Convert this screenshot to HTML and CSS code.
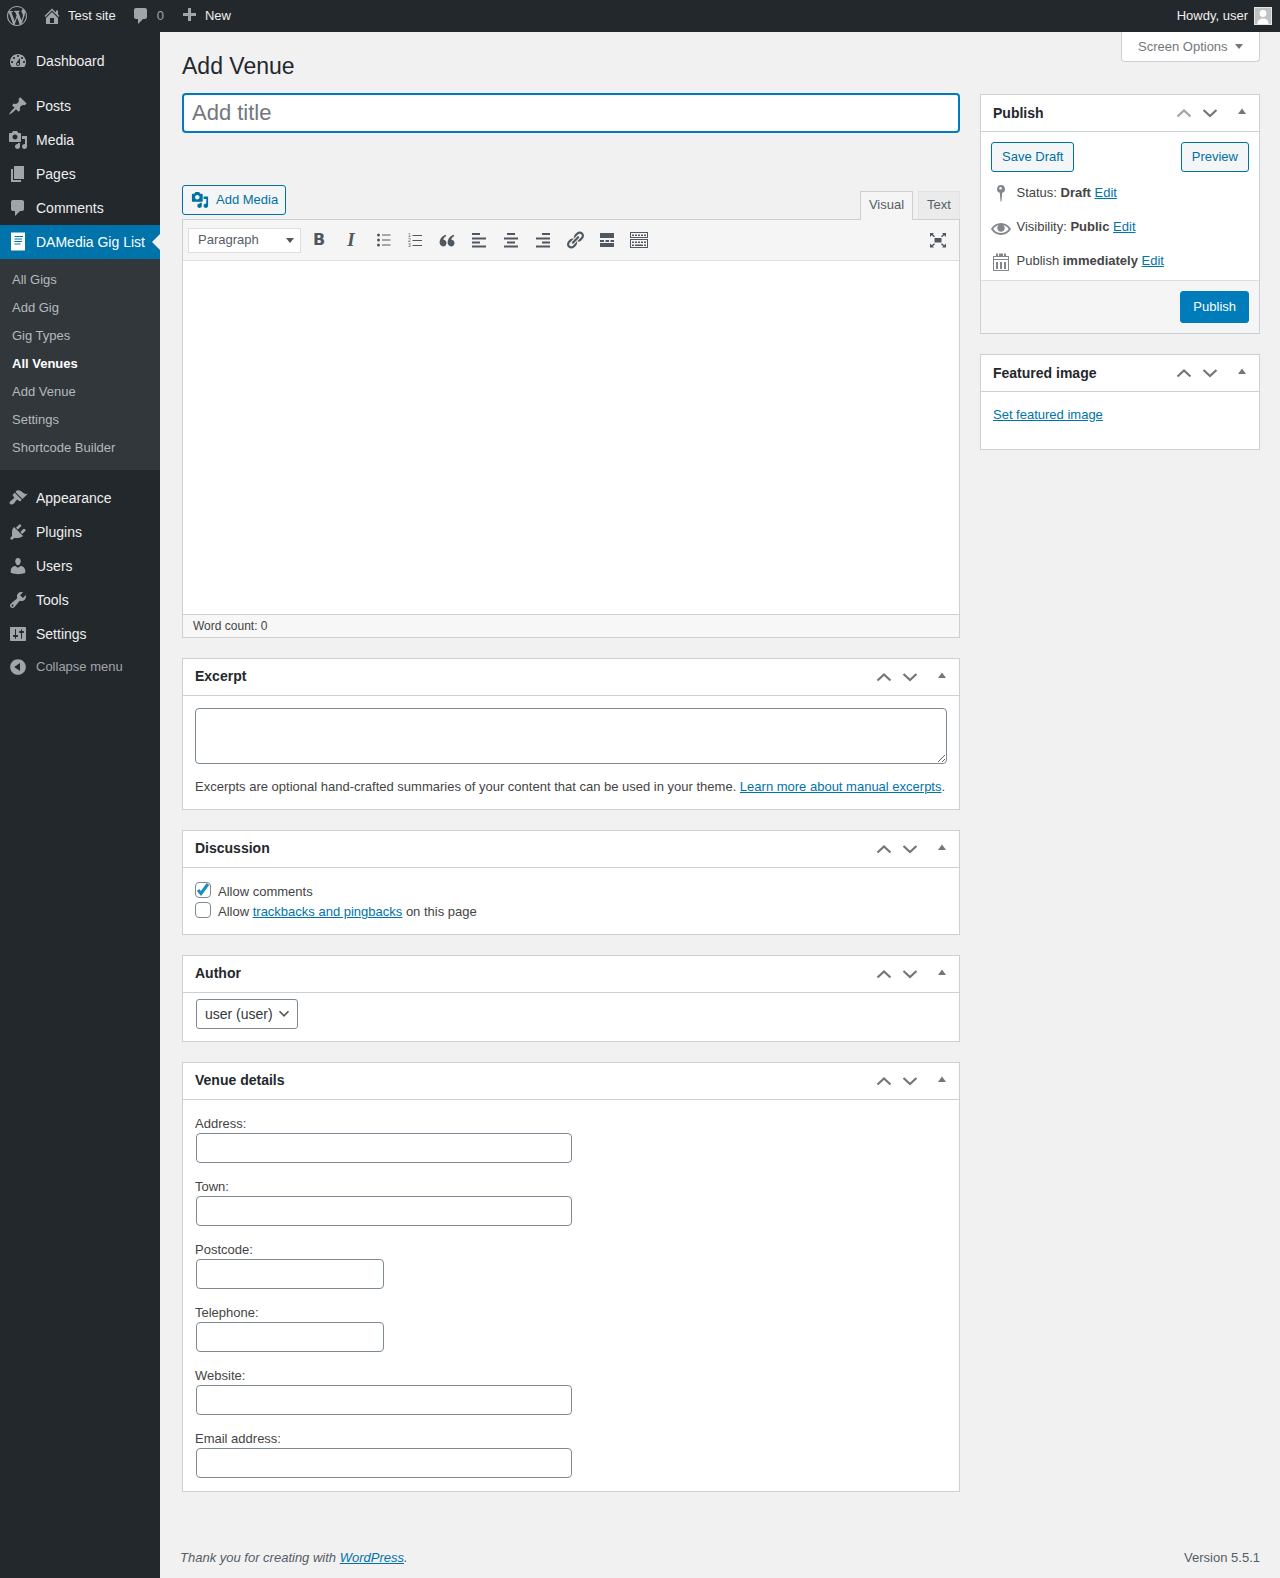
FILE: index.html
```html
<!DOCTYPE html>
<html lang="en">
<head>
  <meta charset="UTF-8">
  <meta name="viewport" content="width=device-width, initial-scale=1.0">
  <title>Add Venue</title>
  <link rel="stylesheet" href="styles.css">
</head>
<body>

<svg class="sprite" xmlns="http://www.w3.org/2000/svg">
  <symbol id="i-dashboard" viewBox="0 0 20 20"><path d="M3.76 16h12.48c1.1-1.37 1.76-3.11 1.76-5 0-4.42-3.58-8-8-8s-8 3.58-8 8c0 1.89.66 3.63 1.76 5zM10 4c.55 0 1 .45 1 1s-.45 1-1 1-1-.45-1-1 .45-1 1-1zM6 6c.55 0 1 .45 1 1s-.45 1-1 1-1-.45-1-1 .45-1 1-1zm8 0c.55 0 1 .45 1 1s-.45 1-1 1-1-.45-1-1 .45-1 1-1zm-5.37 5.55L12 7v6c0 1.1-.9 2-2 2s-2-.9-2-2c0-.57.24-1.08.63-1.45zM4 10c.55 0 1 .45 1 1s-.45 1-1 1-1-.45-1-1 .45-1 1-1zm12 0c.55 0 1 .45 1 1s-.45 1-1 1-1-.45-1-1 .45-1 1-1zm-5 3c0-.55-.45-1-1-1s-1 .45-1 1 .45 1 1 1 1-.45 1-1z"/></symbol>
  <symbol id="i-post" viewBox="0 0 20 20"><path d="M10.44 3.02l1.82-1.82 6.36 6.35-1.83 1.82c-1.05-.68-2.48-.57-3.41.36l-.75.75c-.92.93-1.04 2.35-.35 3.41l-1.83 1.82-2.41-2.41-2.8 2.79c-.42.42-3.38 2.71-3.8 2.29s1.86-3.39 2.28-3.81l2.79-2.79L4.1 9.36l1.83-1.82c1.05.69 2.48.57 3.4-.36l.75-.75c.93-.92 1.05-2.35.36-3.41z"/></symbol>
  <symbol id="i-media" viewBox="0 0 20 20"><path d="M13 11V4c0-.55-.45-1-1-1h-1.67L9 1H5L3.67 3H2c-.55 0-1 .45-1 1v7c0 .55.45 1 1 1h10c.55 0 1-.45 1-1zM7 4.5c1.38 0 2.5 1.12 2.5 2.5S8.38 9.5 7 9.5 4.5 8.38 4.5 7 5.62 4.5 7 4.5zM14 6h5v10.5c0 1.38-1.12 2.5-2.5 2.5S14 17.88 14 16.5s1.12-2.5 2.5-2.5c.17 0 .34.02.5.05V9h-3V6zm-4 8.05V13h2v3.5c0 1.38-1.12 2.5-2.5 2.5S7 17.88 7 16.5 8.12 14 9.5 14c.17 0 .34.02.5.05z"/></symbol>
  <symbol id="i-page" viewBox="0 0 20 20"><path d="M6 15V2h10v13H6zm-1 1h8v2H3V5h2v11z"/></symbol>
  <symbol id="i-comment" viewBox="0 0 20 20"><path d="M5 2h9c1.1 0 2 .9 2 2v7c0 1.1-.9 2-2 2h-2l-5 5v-5H5c-1.1 0-2-.9-2-2V4c0-1.1.9-2 2-2z"/></symbol>
  <symbol id="i-appearance" viewBox="0 0 20 20"><path d="M14.48 11.06L7.41 3.99l1.5-1.5c.5-.56 2.3-.47 3.51.32 1.21.8 1.43 1.28 2.91 2.1 1.18.64 2.45 1.26 4.45.85zm-.71.71L6.7 4.7 4.93 6.47c-.39.39-.39 1.02 0 1.41l1.06 1.06c.39.39.39 1.03 0 1.42-.6.6-1.43 1.11-2.21 1.69-.35.26-.7.53-1.01.84C1.43 13.23 1.29 15.2 2 16s2.77.57 4.11-.77c.31-.31.58-.66.84-1.01.58-.78 1.09-1.61 1.69-2.21.39-.39 1.03-.39 1.42 0l1.06 1.06c.39.39 1.02.39 1.41 0z"/></symbol>
  <symbol id="i-plugins" viewBox="0 0 20 20"><path d="M13.11 4.36L9.87 7.6 8 5.73l3.24-3.24c.35-.34 1.05-.2 1.56.32.52.51.66 1.21.31 1.55zm-8 1.77l.91-1.12 9.01 9.01-1.19.84c-.71.71-2.63 1.16-3.82 1.16H6.14L4.9 17.26c-.59.59-1.54.59-2.12 0-.59-.58-.59-1.53 0-2.12l1.24-1.24v-3.88c0-1.13.4-3.19 1.09-3.89zm7.26 3.97l3.24-3.24c.34-.35 1.04-.21 1.55.31.52.51.66 1.21.31 1.55l-3.24 3.25z"/></symbol>
  <symbol id="i-users" viewBox="0 0 20 20"><path d="M10 9.25c-2.27 0-2.73-3.44-2.73-3.44C7 4.02 7.82 2 9.97 2c2.16 0 2.98 2.02 2.71 3.81 0 0-.41 3.44-2.68 3.44zm0 2.57L12.72 10c2.39 0 4.52 2.33 4.52 4.53v2.49s-3.65 1.13-7.24 1.13c-3.65 0-7.24-1.13-7.24-1.13v-2.49c0-2.25 1.94-4.48 4.47-4.48z"/></symbol>
  <symbol id="i-tools" viewBox="0 0 20 20"><path d="M16.68 9.77c-1.34 1.34-3.3 1.67-4.95.99l-5.41 6.52c-.99.99-2.59.99-3.58 0s-.99-2.59 0-3.57l6.52-5.42c-.68-1.65-.35-3.61.99-4.95 1.28-1.28 3.12-1.62 4.72-1.06l-2.89 2.89 2.82 2.82 2.86-2.87c.53 1.58.18 3.39-1.08 4.65zM3.81 16.21c.4.39 1.04.39 1.43 0 .4-.4.4-1.04 0-1.43-.39-.4-1.03-.4-1.43 0-.39.39-.39 1.03 0 1.43z"/></symbol>
  <symbol id="i-settings" viewBox="0 0 20 20"><path d="M18 16V4c0-.55-.45-1-1-1H3c-.55 0-1 .45-1 1v12c0 .55.45 1 1 1h14c.55 0 1-.45 1-1zM8 11h1c.55 0 1 .45 1 1s-.45 1-1 1H8v1.5c0 .28-.22.5-.5.5s-.5-.22-.5-.5V13H6c-.55 0-1-.45-1-1s.45-1 1-1h1V5.5c0-.28.22-.5.5-.5s.5.22.5.5V11zm5-2h-1c-.55 0-1-.45-1-1s.45-1 1-1h1V5.5c0-.28.22-.5.5-.5s.5.22.5.5V7h1c.55 0 1 .45 1 1s-.45 1-1 1h-1v5.5c0 .28-.22.5-.5.5s-.5-.22-.5-.5V9z"/></symbol>
  <symbol id="i-up" viewBox="0 0 20 20"><path d="M3.5 13.5L10 7.5l6.500 6" fill="none" stroke="currentColor" stroke-width="2.200"/></symbol>
  <symbol id="i-down" viewBox="0 0 20 20"><path d="M3.500 7L10 13l6.500-6" fill="none" stroke="currentColor" stroke-width="2.200"/></symbol>
  <symbol id="i-tri" viewBox="0 0 20 20"><path d="M6 11L10 5.500l4 5.500z"/></symbol>
</svg>

<header class="adminbar">
  <svg class="bar-logo" viewBox="0 0 20 20"><path d="M20 10c0-5.510-4.490-10-10-10C4.480 0 0 4.490 0 10c0 5.520 4.480 10 10 10 5.510 0 10-4.480 10-10zM7.780 15.370L4.370 6.220c.55-.02 1.170-.08 1.170-.08.5-.06.44-1.130-.06-1.110 0 0-1.450.11-2.370.11-.18 0-.37 0-.58-.01C4.120 2.690 6.870 1.110 10 1.110c2.330 0 4.450.87 6.050 2.340-.68-.11-1.650.39-1.650 1.580 0 .74.45 1.360.9 2.100.35.61.55 1.360.55 2.460 0 1.490-1.400 5-1.400 5l-3.030-8.370c.54-.02.82-.17.82-.17.5-.05.44-1.250-.06-1.220 0 0-1.440.12-2.380.12-.87 0-2.330-.12-2.330-.12-.5-.03-.56 1.200-.06 1.220l.92.08 1.260 3.410zM17.410 10c.24-.64.74-1.870.43-4.250.7 1.290 1.050 2.710 1.050 4.250 0 3.290-1.730 6.240-4.400 7.780.97-2.590 1.940-5.200 2.920-7.780zM6.100 18.090C3.120 16.650 1.110 13.530 1.110 10c0-1.300.23-2.480.72-3.590C3.250 10.300 4.670 14.200 6.100 18.090zm4.030-6.630l2.580 6.980c-.86.29-1.760.45-2.710.45-.79 0-1.570-.11-2.290-.33.81-2.380 1.620-4.740 2.420-7.100z"/></svg>
  <a class="bar-item bar-home" href="#">
    <svg viewBox="0 0 20 20"><path d="M16 8.500l1.530 1.530-1.060 1.060L10 4.620l-6.470 6.470-1.060-1.060L10 2.500l4 4v-2h2v4zm-6-2.460l6 5.990V18H4v-5.970zM12 17v-5H8v5h4z"/></svg>
    Test site
  </a>
  <a class="bar-item bar-comments" href="#">
    <svg viewBox="0 0 20 20"><use href="#i-comment"/></svg>
    <span class="bar-count">0</span>
  </a>
  <a class="bar-item bar-new" href="#">
    <svg viewBox="0 0 20 20"><path d="M17 7v3h-5v5H9v-5H4V7h5V2h3v5h5z"/></svg>
    New
  </a>
  <a class="bar-item bar-user" href="#">
    Howdy, user
    <svg class="avatar" viewBox="0 0 18 18">
      <rect width="18" height="18" fill="#e4e5e6"/>
      <rect x="1" y="1" width="16" height="16" fill="#bfc1c3"/>
      <circle cx="9" cy="6.500" r="3.400" fill="#fff"/>
      <path d="M3.500 17c0-4 2.500-5.500 5.500-5.500s5.500 1.500 5.500 5.500z" fill="#fff"/>
    </svg>
  </a>
</header>

<div class="layout">
  <nav class="sidebar">
    <ul class="menu">
      <li class="menu-item"><svg><use href="#i-dashboard"/></svg>Dashboard</li>
      <li class="menu-sep"></li>
      <li class="menu-item"><svg><use href="#i-post"/></svg>Posts</li>
      <li class="menu-item"><svg><use href="#i-media"/></svg>Media</li>
      <li class="menu-item"><svg><use href="#i-page"/></svg>Pages</li>
      <li class="menu-item"><svg><use href="#i-comment"/></svg>Comments</li>
      <li class="menu-item current">
        <svg viewBox="0 0 20 20"><path fill-rule="evenodd" d="M3 .5h14v18H3zM6.500 4v1H15V4zm0 2.500v1H14V6.500zm0 2.500v1H14V9zm0 2.500v1H12.500v-1z"/></svg>
        DAMedia Gig List
      </li>
      <li class="submenu">
        <ul>
          <li>All Gigs</li>
          <li>Add Gig</li>
          <li>Gig Types</li>
          <li class="sub-current">All Venues</li>
          <li>Add Venue</li>
          <li>Settings</li>
          <li>Shortcode Builder</li>
        </ul>
      </li>
      <li class="menu-sep"></li>
      <li class="menu-item"><svg><use href="#i-appearance"/></svg>Appearance</li>
      <li class="menu-item"><svg><use href="#i-plugins"/></svg>Plugins</li>
      <li class="menu-item"><svg><use href="#i-users"/></svg>Users</li>
      <li class="menu-item"><svg><use href="#i-tools"/></svg>Tools</li>
      <li class="menu-item"><svg><use href="#i-settings"/></svg>Settings</li>
      <li class="menu-item collapse">
        <svg viewBox="0 0 20 20"><path d="M10 2.160c4.330 0 7.840 3.510 7.840 7.840s-3.510 7.840-7.840 7.840S2.160 14.330 2.160 10 5.710 2.160 10 2.160zm2 11.720V6.120L6.180 9.970z"/></svg>
        Collapse menu
      </li>
    </ul>
  </nav>

  <main class="content">
    <div class="page-head">
      <h1>Add Venue</h1>
      <button class="screen-options">Screen Options<span class="caret"></span></button>
    </div>

    <div class="columns">
      <div class="col-main">
        <input class="title-input" type="text" placeholder="Add title">

        <div class="editor-top">
          <button class="btn btn-media">
            <svg><use href="#i-media"/></svg>
            Add Media
          </button>
          <div class="tabs">
            <span class="tab active">Visual</span>
            <span class="tab">Text</span>
          </div>
        </div>

        <div class="editor">
          <div class="toolbar">
            <div class="format-select">Paragraph<span class="caret dark"></span></div>
            <span class="tool tool-b">B</span>
            <span class="tool tool-i">I</span>
            <span class="tool">
              <svg viewBox="0 0 20 20"><circle cx="5.500" cy="5" r="1.500"/><circle cx="5.500" cy="10" r="1.500"/><circle cx="5.500" cy="15" r="1.500"/><rect x="9" y="4.500" width="8.500" height="1"/><rect x="9" y="9.500" width="8.500" height="1"/><rect x="9" y="14.500" width="8.500" height="1"/></svg>
            </span>
            <span class="tool">
              <svg viewBox="0 0 20 20"><text x="3" y="7" class="ol-num">1</text><text x="3" y="12" class="ol-num">2</text><text x="3" y="17" class="ol-num">3</text><rect x="7.500" y="5" width="9.500" height="1"/><rect x="7.500" y="10" width="9.500" height="1"/><rect x="7.500" y="15" width="9.500" height="1"/></svg>
            </span>
            <span class="tool">
              <svg viewBox="0 0 20 20"><path d="M9.500 13c0 2-1.400 3.400-3.300 3.400S2.600 15 2.600 12.600C2.600 9 5.200 6 8.600 4.800l.7 1.200C7.500 7 6.500 8.200 6.300 9.700 8.200 9.600 9.500 11 9.500 13zM17.500 13c0 2-1.400 3.400-3.300 3.400s-3.600-1.400-3.600-3.800c0-3.600 2.600-6.600 6-7.800l.7 1.200c-1.800 1-2.800 2.200-3 3.700 1.900-.1 3.200 1.300 3.200 3.300z"/></svg>
            </span>
            <span class="tool">
              <svg viewBox="0 0 20 20"><rect x="3" y="3" width="8" height="2"/><rect x="3" y="7.500" width="14" height="2"/><rect x="3" y="11.500" width="8" height="2"/><rect x="3" y="15.500" width="14" height="2"/></svg>
            </span>
            <span class="tool">
              <svg viewBox="0 0 20 20"><rect x="6" y="3" width="8" height="2"/><rect x="3" y="7.500" width="14" height="2"/><rect x="6" y="11.500" width="8" height="2"/><rect x="3" y="15.500" width="14" height="2"/></svg>
            </span>
            <span class="tool">
              <svg viewBox="0 0 20 20"><rect x="9" y="3" width="8" height="2"/><rect x="3" y="7.500" width="14" height="2"/><rect x="9" y="11.500" width="8" height="2"/><rect x="3" y="15.500" width="14" height="2"/></svg>
            </span>
            <span class="tool">
              <svg viewBox="0 0 20 20"><path d="M17.740 2.760c1.680 1.690 1.680 4.410 0 6.100l-1.530 1.520c-1.120 1.120-2.700 1.470-4.140 1.090l2.620-2.610.76-.77.76-.76c.84-.84.84-2.200 0-3.040-.84-.85-2.200-.85-3.040 0l-.77.76-3.380 3.380c-.37-1.440-.02-3.020 1.100-4.140l1.520-1.530c1.690-1.680 4.420-1.680 6.100 0zM8.590 13.430l5.340-5.340c.42-.42.42-1.100 0-1.520-.44-.43-1.130-.39-1.530 0l-5.330 5.340c-.42.42-.42 1.100 0 1.520.44.43 1.130.39 1.520 0zm-.76 2.290l4.140-4.150c.38 1.440.03 3.020-1.090 4.140l-1.520 1.530c-1.690 1.680-4.410 1.680-6.100 0-1.680-1.680-1.680-4.420 0-6.100l1.530-1.520c1.120-1.120 2.700-1.470 4.140-1.100l-4.140 4.150c-.85.84-.85 2.200 0 3.050.84.84 2.200.84 3.040 0z"/></svg>
            </span>
            <span class="tool">
              <svg viewBox="0 0 20 20"><rect x="3" y="3" width="14" height="5"/><rect x="3" y="10" width="4" height="2"/><rect x="8.500" y="10" width="3.500" height="2"/><rect x="13.500" y="10" width="3.500" height="2"/><rect x="3" y="13" width="14" height="4"/></svg>
            </span>
            <span class="tool">
              <svg viewBox="0 0 20 20"><path fill-rule="evenodd" d="M1 2h18v6H1zm1 1v4h16V3zM1 9h18v9H1zm1 1v7h16v-7z"/><path d="M3 4.500h2v1.500H3zm3 0h2v1.500H6zm3 0h2v1.500H9zm3 0h2v1.500h-2zm3 0h2v1.500h-2zM3 11.500h2V13H3zm3 0h2V13H6zm3 0h2V13H9zm3 0h2V13h-2zm3 0h2V13h-2zM3 14.500h2V16H3zm3 0h8V16H6zm9 0h2V16h-2z"/></svg>
            </span>
            <span class="tool tool-expand">
              <svg viewBox="0 0 20 20"><path d="M6.500 8h7v4.500h-7zM2 3h4L4.800 4.200 7 6.300 6 7.300 3.800 5.200 2 7zM18 3v4l-1.800-1.800L14 7.300 13 6.300l2.200-2.100L14 3zM2 17.500v-4l1.800 1.800L6 13.200l1 1-2.200 2.100L6 17.500zM18 17.500h-4l1.200-1.200L13 14.200l1-1 2.200 2.100 1.800-1.800z"/></svg>
            </span>
          </div>
          <div class="editor-body"></div>
          <div class="editor-status">Word count: 0</div>
        </div>

        <section class="postbox">
          <div class="box-head">
            <h2>Excerpt</h2>
            <div class="handles">
              <svg><use href="#i-up"/></svg><svg><use href="#i-down"/></svg><svg class="tri"><use href="#i-tri"/></svg>
            </div>
          </div>
          <div class="box-body excerpt-body">
            <textarea class="excerpt-input"></textarea>
            <p>Excerpts are optional hand-crafted summaries of your content that can be used in your theme. <a href="#">Learn more about manual excerpts</a>.</p>
          </div>
        </section>

        <section class="postbox">
          <div class="box-head">
            <h2>Discussion</h2>
            <div class="handles">
              <svg><use href="#i-up"/></svg><svg><use href="#i-down"/></svg><svg class="tri"><use href="#i-tri"/></svg>
            </div>
          </div>
          <div class="box-body discussion-body">
            <label class="check-row"><input type="checkbox" checked>Allow comments</label>
            <label class="check-row"><input type="checkbox"><span>Allow <a href="#">trackbacks and pingbacks</a> on this page</span></label>
          </div>
        </section>

        <section class="postbox">
          <div class="box-head">
            <h2>Author</h2>
            <div class="handles">
              <svg><use href="#i-up"/></svg><svg><use href="#i-down"/></svg><svg class="tri"><use href="#i-tri"/></svg>
            </div>
          </div>
          <div class="box-body author-body">
            <select class="author-select"><option>user (user)</option></select>
          </div>
        </section>

        <section class="postbox">
          <div class="box-head">
            <h2>Venue details</h2>
            <div class="handles">
              <svg><use href="#i-up"/></svg><svg><use href="#i-down"/></svg><svg class="tri"><use href="#i-tri"/></svg>
            </div>
          </div>
          <div class="box-body venue-body">
            <div class="field"><label>Address:</label><input type="text"></div>
            <div class="field"><label>Town:</label><input type="text"></div>
            <div class="field"><label>Postcode:</label><input class="short" type="text"></div>
            <div class="field"><label>Telephone:</label><input class="short" type="text"></div>
            <div class="field"><label>Website:</label><input type="text"></div>
            <div class="field"><label>Email address:</label><input type="text"></div>
          </div>
        </section>
      </div>

      <aside class="col-side">
        <section class="postbox">
          <div class="box-head">
            <h2>Publish</h2>
            <div class="handles">
              <svg class="disabled"><use href="#i-up"/></svg><svg><use href="#i-down"/></svg><svg class="tri"><use href="#i-tri"/></svg>
            </div>
          </div>
          <div class="publish-actions">
            <button class="btn">Save Draft</button>
            <button class="btn">Preview</button>
          </div>
          <div class="publish-rows">
            <div class="pub-row">
              <svg viewBox="0 0 20 20"><path fill-rule="evenodd" d="M10 1a4 4 0 0 1 1.200 7.800L10.500 17l-.5 1-.5-1-.7-8.200A4 4 0 0 1 10 1zM9.500 3a1.300 1.300 0 1 0 .01 0z"/></svg>
              <span>Status: <b>Draft</b> <a href="#">Edit</a></span>
            </div>
            <div class="pub-row">
              <svg class="eye" viewBox="0 0 20 20"><path d="M19.700 9.400C17.700 6 14 3.900 10 3.900S2.300 6 .3 9.400L0 10l.3.6c2 3.400 5.700 5.500 9.700 5.500s7.700-2.100 9.700-5.500l.3-.6-.3-.6zM10 14.100c-3.100 0-6-1.600-7.700-4.100C3.600 8 5.700 6.600 8 6.100c-.9.6-1.500 1.700-1.500 2.900 0 1.900 1.600 3.500 3.500 3.500s3.500-1.600 3.500-3.500c0-1.200-.6-2.300-1.500-2.900 2.300.5 4.400 1.900 5.700 3.900-1.700 2.500-4.600 4.100-7.700 4.100z"/><path fill-rule="evenodd" d="M10 5.500a3.500 3.500 0 1 1 0 7 3.500 3.500 0 0 1 0-7zM8.500 7a1.200 1.200 0 1 0 .01 0z"/></svg>
              <span>Visibility: <b>Public</b> <a href="#">Edit</a></span>
            </div>
            <div class="pub-row">
              <svg viewBox="0 0 20 20"><path fill-rule="evenodd" d="M5 1.500h2v2.500h1V1.500h0h4v0V4h1V1.500h2V4h3v15H2V4h3zM3 5v2h14V5zM3 8v10h14V8z"/><rect x="5" y="10" width="2" height="7"/><rect x="9" y="10" width="2" height="7"/><rect x="13" y="10" width="2" height="7"/></svg>
              <span>Publish <b>immediately</b> <a href="#">Edit</a></span>
            </div>
          </div>
          <div class="publish-foot">
            <button class="btn btn-primary">Publish</button>
          </div>
        </section>

        <section class="postbox">
          <div class="box-head">
            <h2>Featured image</h2>
            <div class="handles">
              <svg><use href="#i-up"/></svg><svg><use href="#i-down"/></svg><svg class="tri"><use href="#i-tri"/></svg>
            </div>
          </div>
          <div class="box-body featured-body">
            <a href="#">Set featured image</a>
          </div>
        </section>
      </aside>
    </div>

    <footer class="page-foot">
      <span class="thanks">Thank you for creating with <a href="#">WordPress</a>.</span>
      <span>Version 5.5.1</span>
    </footer>
  </main>
</div>

</body>
</html>
```

FILE: styles.css
```css
* {
  box-sizing: border-box;
}

html, body {
  margin: 0;
  padding: 0;
}

body {
  background: #f1f1f1;
  color: #444;
  font-family: "Liberation Sans", Arial, sans-serif;
  font-size: 13px;
  line-height: 18px;
}

a { color: #0073aa; }

.sprite { display: none; }

/* top bar */
.adminbar {
  display: flex;
  align-items: center;
  height: 32px;
  background: #23282d;
  color: #eee;
}

.adminbar svg {
  width: 20px;
  height: 20px;
  fill: #a0a5aa;
  flex: none;
}

.bar-logo { margin-left: 7px; }

.bar-item {
  display: flex;
  align-items: center;
  color: #eee;
  text-decoration: none;
  gap: 6px;
}

.bar-home { margin-left: 15px; }
.bar-comments { margin-left: 15px; }
.bar-new { margin-left: 15px; }
.bar-count { color: #a0a5aa; }

.bar-user {
  margin-left: auto;
  margin-right: 8px;
}

.adminbar .avatar {
  width: 18px;
  height: 18px;
}

/* sidebar */
.layout {
  display: flex;
  min-height: 1546px;
}

.sidebar {
  flex: 0 0 160px;
  background: #23282d;
}

.menu {
  list-style: none;
  margin: 12px 0 0;
  padding: 0;
}

.menu-item {
  position: relative;
  display: flex;
  align-items: center;
  gap: 8px;
  height: 34px;
  padding-left: 8px;
  color: #eee;
  font-size: 14px;
}

.menu-item svg {
  width: 20px;
  height: 20px;
  fill: #a0a5aa;
  flex: none;
}

.menu-sep { height: 11px; }

.menu-item.current {
  background: #0073aa;
  color: #fff;
}

.menu-item.current svg { fill: #fff; }

.menu-item.current::after {
  content: "";
  position: absolute;
  right: 0;
  top: 9px;
  border: 8px solid transparent;
  border-left: 0;
  border-right-color: #f1f1f1;
}

.menu-item.collapse {
  height: 32px;
  font-size: 13px;
  color: #a0a5aa;
}

.submenu {
  background: #32373c;
}

.submenu ul {
  list-style: none;
  margin: 0;
  padding: 7px 0 8px;
}

.submenu li {
  height: 28px;
  padding-left: 12px;
  line-height: 28px;
  color: #b4b9be;
}

.submenu li.sub-current {
  color: #fff;
  font-weight: 700;
}

/* page */
.content {
  flex: 1;
  min-width: 0;
  padding: 0 20px 0 22px;
}

.page-head {
  display: flex;
  justify-content: space-between;
  align-items: flex-start;
  height: 48px;
  margin-bottom: 13px;
}

h1 {
  margin: 19px 0 0;
  font-size: 23px;
  font-weight: 400;
  line-height: 30px;
  color: #23282d;
}

.screen-options {
  display: flex;
  align-items: center;
  height: 30px;
  width: 139px;
  padding: 0 0 0 16px;
  background: #fff;
  border: 1px solid #ccd0d4;
  border-top: 0;
  border-radius: 0 0 4px 4px;
  color: #72777c;
  font: inherit;
}

.caret {
  margin-left: 7px;
  border: 4px solid transparent;
  border-top: 5px solid #72777c;
  border-bottom: 0;
}

.columns {
  display: flex;
  gap: 20px;
  align-items: flex-start;
}

.col-main { flex: 0 0 778px; }

.col-side {
  flex: 0 0 280px;
  margin-top: 1px;
}

.title-input {
  display: block;
  width: 100%;
  height: 40px;
  padding: 0 8px;
  border: 2px solid #007cba;
  border-radius: 4px;
  background: #fff;
  font: 22px "Liberation Sans", Arial, sans-serif;
  outline: none;
}

.title-input::placeholder { color: #72777c; opacity: 1; }

/* buttons */
.btn {
  display: inline-flex;
  align-items: center;
  height: 30px;
  padding: 0 10px;
  background: #f3f5f6;
  border: 1px solid #0071a1;
  border-radius: 3px;
  color: #0071a1;
  font: inherit;
}

.btn-primary {
  height: 32px;
  padding: 0 12px;
  background: #007cba;
  border-color: #007cba;
  color: #fff;
}

/* editor */
.editor-top {
  display: flex;
  justify-content: space-between;
  align-items: flex-start;
  height: 34px;
  margin-top: 52px;
  position: relative;
}

.btn-media {
  padding: 0 7px 0 8px;
}

.btn-media svg {
  width: 18px;
  height: 18px;
  margin-right: 7px;
  fill: #0071a1;
}

.tabs {
  display: flex;
  gap: 5px;
  margin-top: 6px;
  position: relative;
  z-index: 1;
}

.tab {
  width: 42px;
  height: 28px;
  background: #ebebeb;
  border: 1px solid #e2e4e7;
  border-bottom: 0;
  color: #555d66;
  line-height: 26px;
  text-align: center;
}

.tab.active {
  width: 53px;
  height: 29px;
  background: #f5f5f5;
  border-color: #ccd0d4;
}

.editor {
  border: 1px solid #ccd0d4;
  background: #fff;
}

.toolbar {
  display: flex;
  align-items: center;
  height: 41px;
  padding-left: 5px;
  background: #f5f5f5;
  border-bottom: 1px solid #ddd;
}

.format-select {
  display: flex;
  align-items: center;
  justify-content: space-between;
  width: 113px;
  height: 25px;
  margin-right: 2px;
  padding: 0 6px 0 9px;
  background: #fff;
  border: 1px solid #ddd;
  color: #555d66;
}

.caret.dark { border-top-color: #50575e; }

.tool {
  display: flex;
  align-items: center;
  justify-content: center;
  width: 32px;
  height: 32px;
  color: #50575e;
}

.tool svg {
  width: 20px;
  height: 20px;
  fill: #50575e;
}

.tool-b {
  font-family: "DejaVu Sans", sans-serif;
  font-size: 16px;
  font-weight: 700;
}

.tool-i {
  font-family: "Liberation Serif", serif;
  font-size: 19px;
  font-style: italic;
  font-weight: 700;
}

.ol-num {
  font-size: 5px;
  font-family: "Liberation Sans", sans-serif;
}

.tool-expand { margin-left: auto; margin-right: 5px; }

.editor-body { height: 353px; }

.editor-status {
  height: 23px;
  padding-left: 10px;
  background: #f7f7f7;
  border-top: 1px solid #ccd0d4;
  font-size: 12px;
  line-height: 22px;
  color: #444;
}

/* postboxes */
.postbox {
  margin-bottom: 20px;
  background: #fff;
  border: 1px solid #ccd0d4;
}

.col-main .postbox:last-child { margin-bottom: 0; }
.editor + .postbox { margin-top: 20px; }

.box-head {
  display: flex;
  align-items: center;
  justify-content: space-between;
  height: 37px;
  padding-left: 12px;
  border-bottom: 1px solid #ccd0d4;
}

h2 {
  margin: 0 0 2px;
  font-size: 14px;
  font-weight: 700;
  line-height: 18px;
  color: #23282d;
}

.col-side h2 { margin: 0; }

.handles {
  display: flex;
  align-items: center;
  gap: 6px;
  padding-right: 7px;
}

.handles svg {
  width: 20px;
  height: 20px;
  color: #72777c;
  fill: #72777c;
}

.handles .tri { margin-left: 6px; }
.handles .disabled { color: #a0a5aa; }

.box-body { padding: 0 12px; }

.excerpt-body {
  padding-top: 12px;
  height: 113px;
}

.excerpt-input {
  display: block;
  width: 100%;
  height: 56px;
  border: 1px solid #7e8993;
  border-radius: 4px;
  background: #fff;
}

.excerpt-body p { margin: 14px 0 0; }

.discussion-body {
  padding-top: 14px;
  padding-bottom: 12px;
}

.check-row {
  display: flex;
  align-items: center;
  height: 20px;
}

.check-row input {
  appearance: none;
  align-self: flex-start;
  width: 16px;
  height: 16px;
  margin: 0 7px 0 0;
  background: #fff center/16px no-repeat;
  border: 1px solid #7e8993;
  border-radius: 4px;
}

.check-row input:checked {
  background-image: url("data:image/svg+xml,%3Csvg xmlns='http://www.w3.org/2000/svg' viewBox='0 0 16 16'%3E%3Cpath d='M3 8l3 3.500L13 2' fill='none' stroke='%231e8cbe' stroke-width='3'/%3E%3C/svg%3E");
}

.author-body {
  padding: 6px 12px 12px 13px;
}

.author-select {
  display: block;
  appearance: none;
  width: 102px;
  height: 30px;
  padding: 0 24px 0 8px;
  background: #fff url("data:image/svg+xml,%3Csvg xmlns='http://www.w3.org/2000/svg' viewBox='0 0 20 20'%3E%3Cpath d='M5 7l5 5 5-5' fill='none' stroke='%23555' stroke-width='1.800'/%3E%3C/svg%3E") right 4px center/18px no-repeat;
  border: 1px solid #7e8993;
  border-radius: 3px;
  color: #32373c;
  font: 14px "Liberation Sans", Arial, sans-serif;
}

.venue-body {
  padding-top: 14px;
  padding-bottom: 13px;
}

.field { margin-bottom: 14px; }
.field:last-child { margin-bottom: 0; }

.field label {
  display: block;
  height: 19px;
  line-height: 19px;
}

.field input {
  display: block;
  width: 376px;
  height: 30px;
  margin-left: 1px;
  background: #fff;
  border: 1px solid #7e8993;
  border-radius: 4px;
}

.field input.short { width: 188px; }

/* publish box */
.publish-actions {
  display: flex;
  justify-content: space-between;
  padding: 10px 10px 4px;
}

.publish-rows { padding-bottom: 2px; }

.pub-row {
  display: flex;
  align-items: center;
  gap: 5.500px;
  height: 34px;
  padding-left: 10px;
}

.pub-row svg {
  width: 20px;
  height: 20px;
  fill: #82878c;
  flex: none;
  position: relative;
  top: 1px;
}

.pub-row .eye { top: 2px; }

.publish-foot {
  display: flex;
  justify-content: flex-end;
  padding: 10px;
  background: #f5f5f5;
  border-top: 1px solid #ddd;
}

.featured-body {
  height: 57px;
  padding-top: 14px;
}

/* footer */
.page-foot {
  display: flex;
  justify-content: space-between;
  margin: 57px 0 0 -2px;
  padding-bottom: 11px;
  color: #555d66;
}

.thanks { font-style: italic; }
```
